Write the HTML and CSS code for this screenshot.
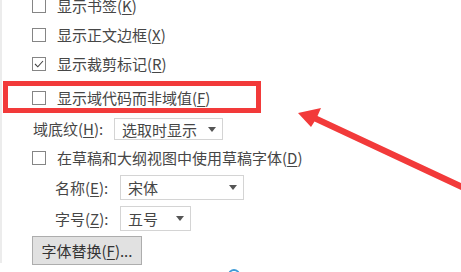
FILE: index.html
```html
<!DOCTYPE html>
<html lang="zh-CN">
<head>
    <meta charset="UTF-8">
    <title>显示选项</title>
    <link rel="stylesheet" href="styles.css">
</head>
<body>
    <div class="panel">
        <div class="options">
            <div class="row">
                <span class="check"></span>
                <span class="label">显示书签(<u>K</u>)</span>
            </div>
            <div class="row">
                <span class="check"></span>
                <span class="label">显示正文边框(<u>X</u>)</span>
            </div>
            <div class="row">
                <span class="check checked">
                    <svg viewBox="0 0 14 14" width="14" height="14"><path d="M3 7 L5.8 9.8 L11 4" fill="none" stroke="#444" stroke-width="1.1"/></svg>
                </span>
                <span class="label">显示裁剪标记(<u>R</u>)</span>
            </div>
            <div class="highlight">
                <div class="row inner">
                    <span class="check"></span>
                    <span class="label">显示域代码而非域值(<u>F</u>)</span>
                </div>
            </div>
            <div class="row shading">
                <span class="label field-label">域底纹(<u>H</u>):</span>
                <div class="select select-shading">
                    <span>选取时显示</span>
                    <i class="caret"></i>
                </div>
            </div>
            <div class="row">
                <span class="check"></span>
                <span class="label">在草稿和大纲视图中使用草稿字体(<u>D</u>)</span>
            </div>
            <div class="row sub name-row">
                <span class="label sub-label">名称(<u>E</u>):</span>
                <div class="select select-name">
                    <span>宋体</span>
                    <i class="caret"></i>
                </div>
            </div>
            <div class="row sub size-row">
                <span class="label sub-label">字号(<u>Z</u>):</span>
                <div class="select select-size">
                    <span>五号</span>
                    <i class="caret"></i>
                </div>
            </div>
            <div class="button-row">
                <button class="btn">字体替换(<u>F</u>)...</button>
            </div>
            <div class="more">
                <span class="info-dot"></span>
            </div>
        </div>

        <!-- annotation arrow -->
        <svg class="arrow" viewBox="0 0 461 272" width="461" height="272">
            <polygon points="298,122 321,117 317.5,125 461,192 461,199 314.5,130.5 311,136" fill="#f23a3a"/>
        </svg>
    </div>
</body>
</html>
```

FILE: styles.css
```css
* {
    margin: 0;
    padding: 0;
    box-sizing: border-box;
}

html, body {
    width: 461px;
    height: 272px;
    overflow: hidden;
    background: #fff;
}

body {
    font-family: "Noto Sans CJK SC", "Microsoft YaHei", sans-serif;
    font-size: 15px;
    color: #464646;
}

.panel {
    position: relative;
    height: 272px;
    border-left: 2px solid #ececec;
}

.options {
    margin-top: -9px;
    padding-left: 30px;
}

.row {
    height: 29px;
    display: flex;
    align-items: center;
}

.check {
    width: 14px;
    height: 14px;
    border: 1px solid #858585;
    background: #fff;
    margin-right: 11px;
    flex-shrink: 0;
    display: flex;
}

.check svg {
    margin: -1px;
}

.label {
    line-height: 1;
    white-space: nowrap;
}

u {
    text-underline-offset: 2px;
}

.highlight {
    margin-top: 3px;
    margin-left: -29px;
    width: 258px;
    height: 32px;
    border: 5px solid #f23a3a;
    padding-left: 24px;
    display: flex;
    align-items: center;
}

.highlight .inner {
    height: auto;
    padding-top: 1px;
}

.shading {
    height: 30px;
    padding-left: 1px;
}

.field-label {
    width: 81px;
}

.select {
    height: 22px;
    border: 1px solid #d4d4d4;
    background: #fff;
    display: flex;
    align-items: center;
    justify-content: space-between;
    padding: 0 6px 0 7px;
}

.select span {
    line-height: 1;
}

.caret {
    width: 0;
    height: 0;
    border-left: 4.5px solid transparent;
    border-right: 4.5px solid transparent;
    border-top: 5px solid #555;
}

.select-shading {
    width: 109px;
    margin-top: 2px;
}

.sub {
    padding-left: 23px;
}

.sub-label {
    width: 65px;
}

.name-row {
    height: 31px;
}

.size-row {
    height: 30px;
}

.select-name {
    width: 124px;
    height: 25px;
}

.select-size {
    width: 71px;
    height: 25px;
}

.button-row {
    margin-top: 3px;
}

.btn {
    width: 110px;
    height: 29px;
    background: #e1e1e1;
    border: 1px solid #adadad;
    font-family: inherit;
    font-size: 15px;
    color: #333;
    line-height: 1;
}

.more {
    margin-top: 4px;
    padding-left: 196px;
}

.info-dot {
    display: block;
    width: 12px;
    height: 12px;
    border-radius: 50%;
    border: 2px solid #3d9ad6;
}

.arrow {
    position: absolute;
    left: -2px;
    top: 0;
    pointer-events: none;
}
```
